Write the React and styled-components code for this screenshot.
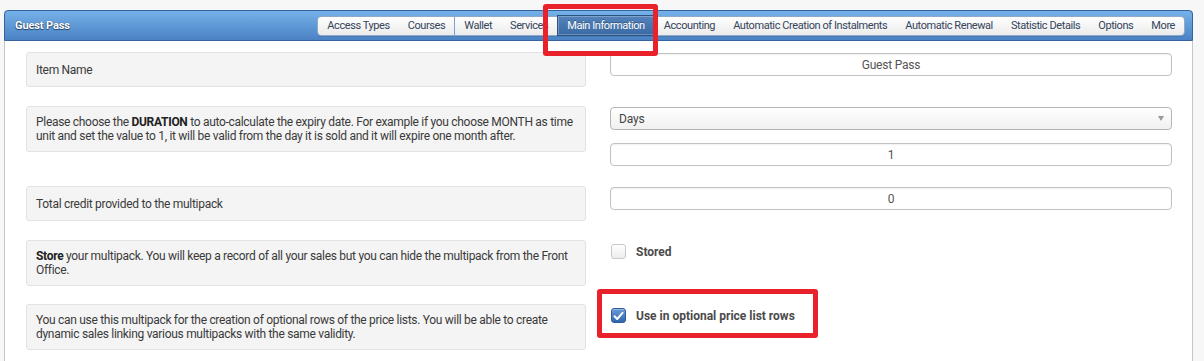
import React from "react";
import styled, { createGlobalStyle } from "styled-components";

const GlobalStyle = createGlobalStyle`
  html, body { margin: 0; padding: 0; }
  body {
    background: #f7f7f7;
    font-family: Roboto, "Liberation Sans", Arial, sans-serif;
    font-size: 12px;
    color: #3c3c3c;
  }
`;

const Page = styled.div`
  position: relative;
  padding: 10px 11px 0 4px;
  height: 351px;
  overflow: hidden;
`;

const Panel = styled.section`
  background: #fff;
  border-left: 1px solid #c6c6c6;
  border-right: 1px solid #c6c6c6;
  border-radius: 4px 4px 0 0;
  height: 100%;
`;

const Header = styled.header`
  box-sizing: border-box;
  height: 31px;
  margin: 0 -1px;
  display: flex;
  align-items: center;
  padding: 0 7px 0 10px;
  background: linear-gradient(#75b1e9, #4b82c4);
  border: 1px solid #33649e;
  border-radius: 4px 4px 0 0;
`;

const Title = styled.h1`
  margin: 0;
  font-size: 11px;
  font-weight: 700;
  color: #fff;
  letter-spacing: -0.1px;
  text-shadow: 0 1px 1px #1f3f66, 0 0 1px #1f3f66;
`;

const TabBar = styled.nav`
  margin-left: auto;
  display: flex;
  align-items: stretch;
  height: 20px;
  box-sizing: border-box;
  background: linear-gradient(#ffffff, #ebebeb);
  border: 1px solid #8fa9c8;
  border-radius: 4px;
  box-shadow: 0 1px 0 rgba(0, 0, 0, 0.1);
`;

const Tab = styled.span`
  display: flex;
  align-items: center;
  padding: 0 9px;
  font-size: 11px;
  letter-spacing: -0.42px;
  white-space: nowrap;
  color: ${(p) => (p.$active ? "#ffffff" : "#34445a")};
  border-left: ${(p) => (p.$sep ? "1px solid #7aa3d4" : "0")};
  ${(p) =>
    p.$active &&
    `
    margin: -2px 0 -1px;
    background: linear-gradient(#5583bb, #3a6aa4);
    border: 1px solid #2b5283;
    box-shadow: inset 0 0 0 1px rgba(255,255,255,0.25);
    text-shadow: 0 -1px 0 rgba(0,0,0,0.3);
  `}
`;

const Content = styled.div`
  padding: 11px 20px 0 21px;
`;

const Row = styled.div`
  display: grid;
  grid-template-columns: 560px 1fr;
  column-gap: 24px;
  align-items: start;
  margin-bottom: ${(p) => p.$gap || 19}px;
`;

const Label = styled.div`
  box-sizing: border-box;
  min-height: 35px;
  display: flex;
  align-items: center;
  padding: 8px 5px 8px 9px;
  background: #f4f4f4;
  border: 1px solid #e2e2e2;
  border-radius: 3px;
  line-height: 14px;
  letter-spacing: -0.3px;
  color: #3a3a3a;

  b { font-weight: 700; color: #222; }
`;

const Field = styled.div`
  display: flex;
  flex-direction: column;
  gap: 13px;
  padding-top: ${(p) => p.$top || 1}px;
`;

const TextInput = styled.div`
  box-sizing: border-box;
  height: 23px;
  display: flex;
  align-items: center;
  justify-content: center;
  background: #fff;
  border: 1px solid #c2c2c2;
  border-radius: 4px;
  box-shadow: inset 0 1px 2px rgba(0, 0, 0, 0.06);
  color: #555;
  letter-spacing: -0.2px;
`;

const Select = styled.div`
  box-sizing: border-box;
  height: 23px;
  display: flex;
  align-items: center;
  justify-content: space-between;
  padding: 0 7px 0 8px;
  background: linear-gradient(#ffffff, #f0f0f0);
  border: 1px solid #b5b5b5;
  border-radius: 4px;
  color: #444;
  letter-spacing: -0.2px;
`;

const Caret = styled.span`
  width: 0;
  height: 0;
  border-left: 3px solid transparent;
  border-right: 3px solid transparent;
  border-top: 5px solid #999;
`;

const CheckRow = styled.label`
  display: flex;
  align-items: center;
  gap: 10px;
  padding: ${(p) => p.$top || 4}px 0 0 1px;
  font-weight: 700;
  color: #4a4a4a;
  letter-spacing: 0;
  text-shadow: 0 1px 0 #fff;
`;

const Box = styled.span`
  box-sizing: border-box;
  width: 15px;
  height: 15px;
  flex: none;
  display: flex;
  align-items: center;
  justify-content: center;
  border-radius: 3px;
  border: 1px solid ${(p) => (p.$checked ? "#2c5e9e" : "#c9c9c9")};
  background: ${(p) =>
    p.$checked
      ? "linear-gradient(#6a9ad6, #2f67ad)"
      : "linear-gradient(#ffffff, #ececec)"};
  box-shadow: ${(p) => (p.$checked ? "inset 0 1px 0 rgba(255,255,255,.3)" : "none")};
`;

const Annotation = styled.div`
  position: absolute;
  box-sizing: border-box;
  border: 5px solid #e8212b;
  border-radius: 3px;
  pointer-events: none;
`;

const tabs = [
  { t: "Access Types" },
  { t: "Courses" },
  { t: "Wallet", sep: true },
  { t: "Services" },
  { t: "Main Information", active: true },
  { t: "Accounting" },
  { t: "Automatic Creation of Instalments" },
  { t: "Automatic Renewal" },
  { t: "Statistic Details" },
  { t: "Options" },
  { t: "More" },
];

const Check = () => (
  <svg width="11" height="10" viewBox="0 0 11 10">
    <path d="M1.5 5.2 L4.2 8 L9.5 1.8" fill="none" stroke="#fff" strokeWidth="2" strokeLinecap="round" strokeLinejoin="round" />
  </svg>
);

export default function App() {
  return (
    <>
      <GlobalStyle />
      <Page>
        <Panel>
          <Header>
            <Title>Guest Pass</Title>
            <TabBar>
              {tabs.map((x) => (
                <Tab key={x.t} $active={x.active} $sep={x.sep}>
                  {x.t}
                </Tab>
              ))}
            </TabBar>
          </Header>
          <Content>
            <Row>
              <Label>Item Name</Label>
              <Field>
                <TextInput>Guest Pass</TextInput>
              </Field>
            </Row>
            <Row $gap={20}>
              <Label>
                <span>
                  Please choose the <b>DURATION</b> to auto-calculate the expiry date. For example if you choose MONTH as time unit and set the value to 1, it will be valid from the day it is sold and it will expire one month after.
                </span>
              </Label>
              <Field $top={1}>
                <Select>
                  <span>Days</span>
                  <Caret />
                </Select>
                <TextInput>1</TextInput>
              </Field>
            </Row>
            <Row>
              <Label>Total credit provided to the multipack</Label>
              <Field>
                <TextInput>0</TextInput>
              </Field>
            </Row>
            <Row $gap={18}>
              <Label>
                <span>
                  <b>Store</b> your multipack. You will keep a record of all your sales but you can hide the multipack from the Front Office.
                </span>
              </Label>
              <CheckRow>
                <Box />
                Stored
              </CheckRow>
            </Row>
            <Row>
              <Label>
                <span>
                  You can use this multipack for the creation of optional rows of the price lists. You will be able to create dynamic sales linking various multipacks with the same validity.
                </span>
              </Label>
              <CheckRow>
                <Box $checked>
                  <Check />
                </Box>
                Use in optional price list rows
              </CheckRow>
            </Row>
          </Content>
        </Panel>
        <Annotation style={{ left: 543, top: 4, width: 115, height: 52 }} />
        <Annotation style={{ left: 597, top: 289, width: 221, height: 49 }} />
      </Page>
    </>
  );
}
